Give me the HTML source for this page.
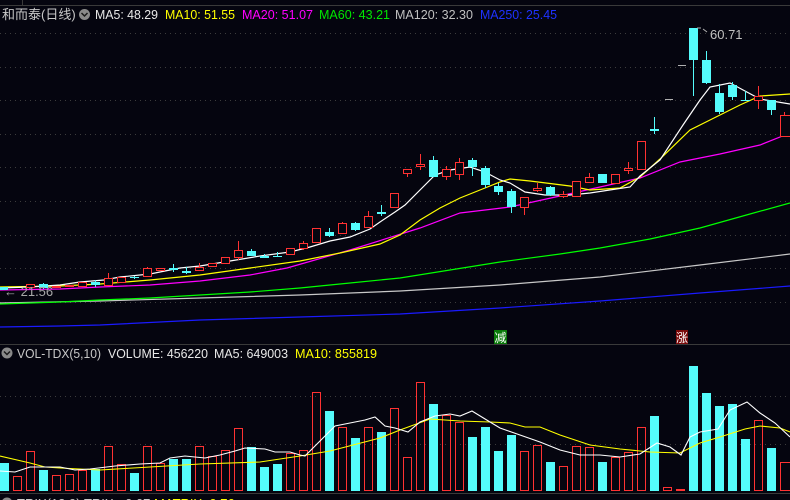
<!DOCTYPE html>
<html><head><meta charset="utf-8"><style>
html,body{margin:0;padding:0;background:#05050f;width:790px;height:500px;overflow:hidden}
svg{display:block}
text{font-family:"Liberation Sans","Noto Sans CJK SC",sans-serif;font-size:13px}
</style></head><body>
<svg width="790" height="500" viewBox="0 0 790 500" xmlns="http://www.w3.org/2000/svg">
<rect width="790" height="500" fill="#05050f"/>
<line x1="0" y1="5.5" x2="790" y2="5.5" stroke="#3a3a3a"/>
<line x1="22.5" y1="0" x2="22.5" y2="5" stroke="#3a3a3a"/>
<g stroke="#3c3c3c" stroke-dasharray="1,4">
<line x1="0" y1="33.5" x2="790" y2="33.5"/><line x1="0" y1="67.5" x2="790" y2="67.5"/>
<line x1="0" y1="100.5" x2="790" y2="100.5"/><line x1="0" y1="134.5" x2="790" y2="134.5"/>
<line x1="0" y1="167.5" x2="790" y2="167.5"/><line x1="0" y1="201.5" x2="790" y2="201.5"/>
<line x1="0" y1="235.5" x2="790" y2="235.5"/><line x1="0" y1="268.5" x2="790" y2="268.5"/>
<line x1="0" y1="302.5" x2="790" y2="302.5"/>
<line x1="0" y1="396.5" x2="790" y2="396.5"/><line x1="0" y1="444.5" x2="790" y2="444.5"/>
</g>
<line x1="0" y1="344.5" x2="790" y2="344.5" stroke="#3a3a3a"/>
<line x1="0" y1="493.5" x2="790" y2="493.5" stroke="#3a3a3a"/>

<text x="2" y="19" fill="#c8c8c8">和而泰(日线)</text>
<circle cx="84.5" cy="14.5" r="5.5" fill="#8a8a8a"/><path d="M81.5 13 L84.5 16 L87.5 13" stroke="#1a1a1a" stroke-width="1.5" fill="none"/>
<text x="95" y="19" fill="#e8e8e8" textLength="63" lengthAdjust="spacingAndGlyphs">MA5: 48.29</text>
<text x="165" y="19" fill="#ffff00" textLength="70" lengthAdjust="spacingAndGlyphs">MA10: 51.55</text>
<text x="242" y="19" fill="#ff00ff" textLength="71" lengthAdjust="spacingAndGlyphs">MA20: 51.07</text>
<text x="319" y="19" fill="#00e600" textLength="71" lengthAdjust="spacingAndGlyphs">MA60: 43.21</text>
<text x="395" y="19" fill="#c0c0c0" textLength="78" lengthAdjust="spacingAndGlyphs">MA120: 32.30</text>
<text x="480" y="19" fill="#1e32ff" textLength="77" lengthAdjust="spacingAndGlyphs">MA250: 25.45</text>

<g fill="none" stroke-width="1.2">
<polyline stroke="#1a1aff" points="0,327 60,326 100,325 200,320 300,317 400,314 500,308 600,301 700,293 790,286"/>
<polyline stroke="#c8c8c8" points="0,303 100,301 200,298 300,295 400,291 500,285 600,277 700,265 790,254"/>
<polyline stroke="#00ff00" points="0,304 60,302 100,300 150,298 200,295 250,292 300,288 350,283 400,278 450,270 500,262 560,254 600,248 650,239 700,228 750,214 790,203"/>
<polyline stroke="#ff00ff" points="0,290 60,289 100,287 150,285 200,281 250,275 287,268 350,250 420,228 460,213 510,207 560,196 600,187 640,178 680,162 720,154 760,145 790,133"/>
<polyline stroke="#ffff00" points="0,287 60,286 100,284 150,280 200,275 250,268 300,261 340,253 380,244 400,235 420,220 440,208 460,198 480,190 500,182 510,179 530,181 570,186 590,190 620,188 640,177 660,159 690,130 710,120 740,105 760,96 790,94"/>
<polyline stroke="#ffffff" points="0,288 30,287 60,285 80,282 104,280 120,277 150,274 180,268 200,266 230,261 260,256 290,252 310,247 330,241 350,237 370,229 380,222 395,212 405,205 420,190 435,175 450,170 470,167 485,172 500,180 510,183 525,192 545,195 570,195 590,193 630,187 640,176 660,160 683,125 700,100 710,87 730,83 745,91 760,99 790,104"/>
</g>

<g stroke-width="1" shape-rendering="crispEdges">
<g stroke="#ff3232" fill="#05050f">
<line x1="30.5" y1="284" x2="30.5" y2="288"/><rect x="26.5" y="284.5" width="8" height="3"/>
<rect x="52.5" y="286.5" width="8" height="1"/>
<rect x="65.5" y="285.5" width="8" height="1"/>
<rect x="78.5" y="282.5" width="8" height="4"/>
<line x1="108.5" y1="273" x2="108.5" y2="286"/><rect x="104.5" y="278.5" width="8" height="7"/>
<rect x="117.5" y="277.5" width="8" height="5"/>
<line x1="147.5" y1="267" x2="147.5" y2="277"/><rect x="143.5" y="268.5" width="8" height="8"/>
<rect x="156.5" y="268.5" width="8" height="2"/>
<line x1="199.5" y1="263" x2="199.5" y2="271"/><rect x="195.5" y="267.5" width="8" height="3"/>
<rect x="208.5" y="263.5" width="8" height="3"/>
<rect x="221.5" y="257.5" width="8" height="6"/>
<line x1="238.5" y1="241" x2="238.5" y2="260"/><rect x="234.5" y="250.5" width="8" height="7"/>
<rect x="286.5" y="248.5" width="8" height="6"/>
<line x1="303.5" y1="241" x2="303.5" y2="250"/><rect x="299.5" y="243.5" width="8" height="5"/>
<rect x="312.5" y="228.5" width="8" height="14"/>
<line x1="342.5" y1="222" x2="342.5" y2="234"/><rect x="338.5" y="223.5" width="8" height="10"/>
<line x1="368.5" y1="211" x2="368.5" y2="228"/><rect x="364.5" y="216.5" width="8" height="11"/>
<rect x="390.5" y="193.5" width="8" height="14"/>
<line x1="407.5" y1="169" x2="407.5" y2="177"/><rect x="403.5" y="169.5" width="8" height="4"/>
<line x1="420.5" y1="154" x2="420.5" y2="170"/><rect x="416.5" y="164.5" width="8" height="2"/>
<line x1="446.5" y1="166" x2="446.5" y2="180"/><rect x="442.5" y="169.5" width="8" height="7"/>
<line x1="459.5" y1="158" x2="459.5" y2="180"/><rect x="455.5" y="162.5" width="8" height="12"/>
<line x1="524.5" y1="197" x2="524.5" y2="215"/><rect x="520.5" y="197.5" width="8" height="10"/>
<line x1="537.5" y1="183" x2="537.5" y2="192"/><rect x="533.5" y="188.5" width="8" height="2"/>
<line x1="563.5" y1="191" x2="563.5" y2="198"/><rect x="559.5" y="194.5" width="8" height="2"/>
<rect x="572.5" y="181.5" width="8" height="15"/>
<line x1="589.5" y1="173" x2="589.5" y2="183"/><rect x="585.5" y="177.5" width="8" height="5"/>
<rect x="611.5" y="174.5" width="8" height="9"/>
<line x1="628.5" y1="162" x2="628.5" y2="174"/><rect x="624.5" y="168.5" width="8" height="2"/>
<rect x="637.5" y="141.5" width="8" height="28"/>
<line x1="758.5" y1="86" x2="758.5" y2="109"/><rect x="754.5" y="96.5" width="8" height="4"/>
<line x1="784.5" y1="112" x2="784.5" y2="137"/><rect x="780.5" y="115.5" width="10" height="21"/>
</g>
<g fill="#54fcfc" stroke="#54fcfc">
<rect x="0" y="287" width="8" height="3" stroke="none"/>
<line x1="43.5" y1="283" x2="43.5" y2="289"/><rect x="39" y="284" width="9" height="4" stroke="none"/>
<line x1="95.5" y1="280" x2="95.5" y2="287"/><rect x="91" y="282" width="9" height="3" stroke="none"/>
<line x1="134.5" y1="276" x2="134.5" y2="279"/><rect x="130" y="277" width="9" height="1" stroke="none"/>
<line x1="173.5" y1="264" x2="173.5" y2="272"/><rect x="169" y="268" width="9" height="2" stroke="none"/>
<line x1="186.5" y1="267" x2="186.5" y2="274"/><rect x="182" y="271" width="9" height="2" stroke="none"/>
<line x1="251.5" y1="249" x2="251.5" y2="256"/><rect x="247" y="251" width="9" height="5" stroke="none"/>
<line x1="264.5" y1="254" x2="264.5" y2="258"/><rect x="260" y="256" width="9" height="2" stroke="none"/>
<line x1="277.5" y1="252" x2="277.5" y2="257"/><rect x="273" y="256" width="9" height="1" stroke="none"/>
<line x1="329.5" y1="228" x2="329.5" y2="237"/><rect x="325" y="232" width="9" height="4" stroke="none"/>
<line x1="355.5" y1="222" x2="355.5" y2="231"/><rect x="351" y="223" width="9" height="7" stroke="none"/>
<line x1="381.5" y1="205" x2="381.5" y2="216"/><rect x="377" y="212" width="9" height="2" stroke="none"/>
<line x1="433.5" y1="156" x2="433.5" y2="177"/><rect x="429" y="160" width="9" height="17" stroke="none"/>
<line x1="472.5" y1="158" x2="472.5" y2="176"/><rect x="468" y="160" width="9" height="7" stroke="none"/>
<line x1="485.5" y1="166" x2="485.5" y2="188"/><rect x="481" y="168" width="9" height="17" stroke="none"/>
<line x1="498.5" y1="183" x2="498.5" y2="195"/><rect x="494" y="186" width="9" height="6" stroke="none"/>
<line x1="511.5" y1="189" x2="511.5" y2="213"/><rect x="507" y="191" width="9" height="16" stroke="none"/>
<line x1="550.5" y1="186" x2="550.5" y2="196"/><rect x="546" y="187" width="9" height="8" stroke="none"/>
<rect x="598" y="174" width="9" height="9" stroke="none"/>
<line x1="654.5" y1="117" x2="654.5" y2="134"/><rect x="650" y="129" width="9" height="2" stroke="none"/>
<line x1="693.5" y1="28" x2="693.5" y2="96"/><rect x="689" y="28" width="9" height="32" stroke="none"/>
<line x1="706.5" y1="51" x2="706.5" y2="84"/><rect x="702" y="60" width="9" height="23" stroke="none"/>
<line x1="719.5" y1="84" x2="719.5" y2="114"/><rect x="715" y="93" width="9" height="19" stroke="none"/>
<line x1="732.5" y1="82" x2="732.5" y2="100"/><rect x="728" y="85" width="9" height="12" stroke="none"/>
<line x1="745.5" y1="91" x2="745.5" y2="101"/><rect x="741" y="100" width="9" height="1" stroke="none"/>
<line x1="771.5" y1="100" x2="771.5" y2="115"/><rect x="767" y="100" width="9" height="10" stroke="none"/>
</g>
<line x1="665" y1="99.5" x2="673" y2="99.5" stroke="#b0b0b0"/>
<line x1="678" y1="65.5" x2="686" y2="65.5" stroke="#b0b0b0"/>
</g>
<path d="M697 28 L701 28 M703 29 L707 32" stroke="#b0b0b0" fill="none"/>
<text x="710" y="39" fill="#c0c0c0">60.71</text>
<text x="4" y="296" fill="#a8a8a8">← 21.56</text>

<rect x="494" y="330" width="13" height="14" fill="#0a7a0a"/>
<text x="494.5" y="342" fill="#ffffff" style="font-size:12px">减</text>
<rect x="676" y="330" width="12" height="14" fill="#7a0a0a"/>
<text x="676" y="342" fill="#ffffff" style="font-size:12px">涨</text>

<circle cx="7" cy="353" r="5.5" fill="#8a8a8a"/><path d="M4 351.5 L7 354.5 L10 351.5" stroke="#1a1a1a" stroke-width="1.5" fill="none"/>
<text x="17" y="358" fill="#c8c8c8" textLength="84" lengthAdjust="spacingAndGlyphs">VOL-TDX(5,10)</text>
<text x="108" y="358" fill="#e8e8e8" textLength="100" lengthAdjust="spacingAndGlyphs">VOLUME: 456220</text>
<text x="214" y="358" fill="#e8e8e8" textLength="74" lengthAdjust="spacingAndGlyphs">MA5: 649003</text>
<text x="295" y="358" fill="#ffff00" textLength="82" lengthAdjust="spacingAndGlyphs">MA10: 855819</text>

<g shape-rendering="crispEdges">
<g fill="#54fcfc">
<rect x="0" y="463" width="9" height="28"/><rect x="39" y="470" width="9" height="21"/><rect x="91" y="469" width="9" height="22"/>
<rect x="130" y="473" width="9" height="18"/><rect x="169" y="459" width="9" height="32"/><rect x="182" y="459" width="9" height="32"/>
<rect x="247" y="447" width="9" height="44"/><rect x="260" y="467" width="9" height="24"/><rect x="273" y="464" width="9" height="27"/>
<rect x="325" y="411" width="9" height="80"/><rect x="351" y="438" width="9" height="53"/><rect x="377" y="432" width="9" height="59"/>
<rect x="429" y="404" width="9" height="87"/><rect x="468" y="437" width="9" height="54"/><rect x="481" y="427" width="9" height="64"/>
<rect x="494" y="451" width="9" height="40"/><rect x="507" y="435" width="9" height="56"/><rect x="546" y="462" width="9" height="29"/>
<rect x="598" y="462" width="9" height="29"/><rect x="650" y="416" width="9" height="75"/><rect x="689" y="366" width="9" height="125"/>
<rect x="702" y="393" width="9" height="98"/><rect x="715" y="406" width="9" height="85"/><rect x="728" y="404" width="9" height="87"/>
<rect x="741" y="439" width="9" height="52"/><rect x="767" y="448" width="9" height="43"/>
<rect x="676" y="489" width="9" height="2" fill="#ff3232"/>
</g>
<g fill="none" stroke="#ff3232">
<rect x="13.5" y="476.5" width="8" height="14"/><rect x="26.5" y="451.5" width="8" height="39"/><rect x="52.5" y="475.5" width="8" height="15"/>
<rect x="65.5" y="474.5" width="8" height="16"/><rect x="78.5" y="470.5" width="8" height="20"/><rect x="104.5" y="446.5" width="8" height="44"/>
<rect x="117.5" y="464.5" width="8" height="26"/><rect x="143.5" y="446.5" width="8" height="44"/><rect x="156.5" y="463.5" width="8" height="27"/>
<rect x="195.5" y="446.5" width="8" height="44"/><rect x="208.5" y="456.5" width="8" height="34"/><rect x="221.5" y="450.5" width="8" height="40"/>
<rect x="234.5" y="428.5" width="8" height="62"/><rect x="286.5" y="453.5" width="8" height="37"/><rect x="299.5" y="450.5" width="8" height="40"/>
<rect x="312.5" y="392.5" width="8" height="98"/><rect x="338.5" y="427.5" width="8" height="63"/><rect x="364.5" y="427.5" width="8" height="63"/>
<rect x="390.5" y="408.5" width="8" height="82"/><rect x="403.5" y="457.5" width="8" height="33"/><rect x="416.5" y="382.5" width="8" height="108"/>
<rect x="442.5" y="415.5" width="8" height="75"/><rect x="455.5" y="422.5" width="8" height="68"/><rect x="520.5" y="451.5" width="8" height="39"/>
<rect x="533.5" y="445.5" width="8" height="45"/><rect x="559.5" y="466.5" width="8" height="24"/><rect x="572.5" y="446.5" width="8" height="44"/>
<rect x="585.5" y="447.5" width="8" height="43"/><rect x="611.5" y="457.5" width="8" height="33"/><rect x="624.5" y="452.5" width="8" height="38"/>
<rect x="637.5" y="427.5" width="8" height="63"/><rect x="663.5" y="487.5" width="8" height="3"/><rect x="754.5" y="420.5" width="8" height="70"/>
<rect x="780.5" y="462.5" width="10" height="28"/>
</g>
</g>
<g fill="none" stroke-width="1.1">
<polyline stroke="#ffff00" points="0,456 30,463 45,467 60,468 100,470 150,467 200,464 260,462 300,456 330,451 380,438 400,430 430,419 460,421 490,422 510,423 525,427 540,427 560,435 590,445 620,449 650,452 680,453 700,443 720,437 745,429 760,426 780,428 790,432"/>
<polyline stroke="#ffffff" points="0,471 15,472 30,467 60,467 75,470 90,469 115,466 140,464 160,463 170,458 185,456 205,458 220,455 235,451 245,448 265,449 275,452 290,452 300,455 305,456 320,441 335,426 350,423 365,420 375,417 385,426 395,428 408,432 420,422 435,416 450,414 460,416 472,411 490,422 500,428 520,435 540,442 560,450 580,455 600,455 620,457 640,454 657,443 670,447 681,455 690,437 700,432 718,429 730,410 747,402 760,413 775,423 790,437"/>
</g>
<text x="17" y="508" fill="#c8c8c8">TRIX(12,9)  TRIX: -0.07  <tspan fill="#ffff00">MATRIX: 0.76</tspan></text>
<circle cx="7" cy="503" r="5.5" fill="#8a8a8a"/>
</svg>
</body></html>
